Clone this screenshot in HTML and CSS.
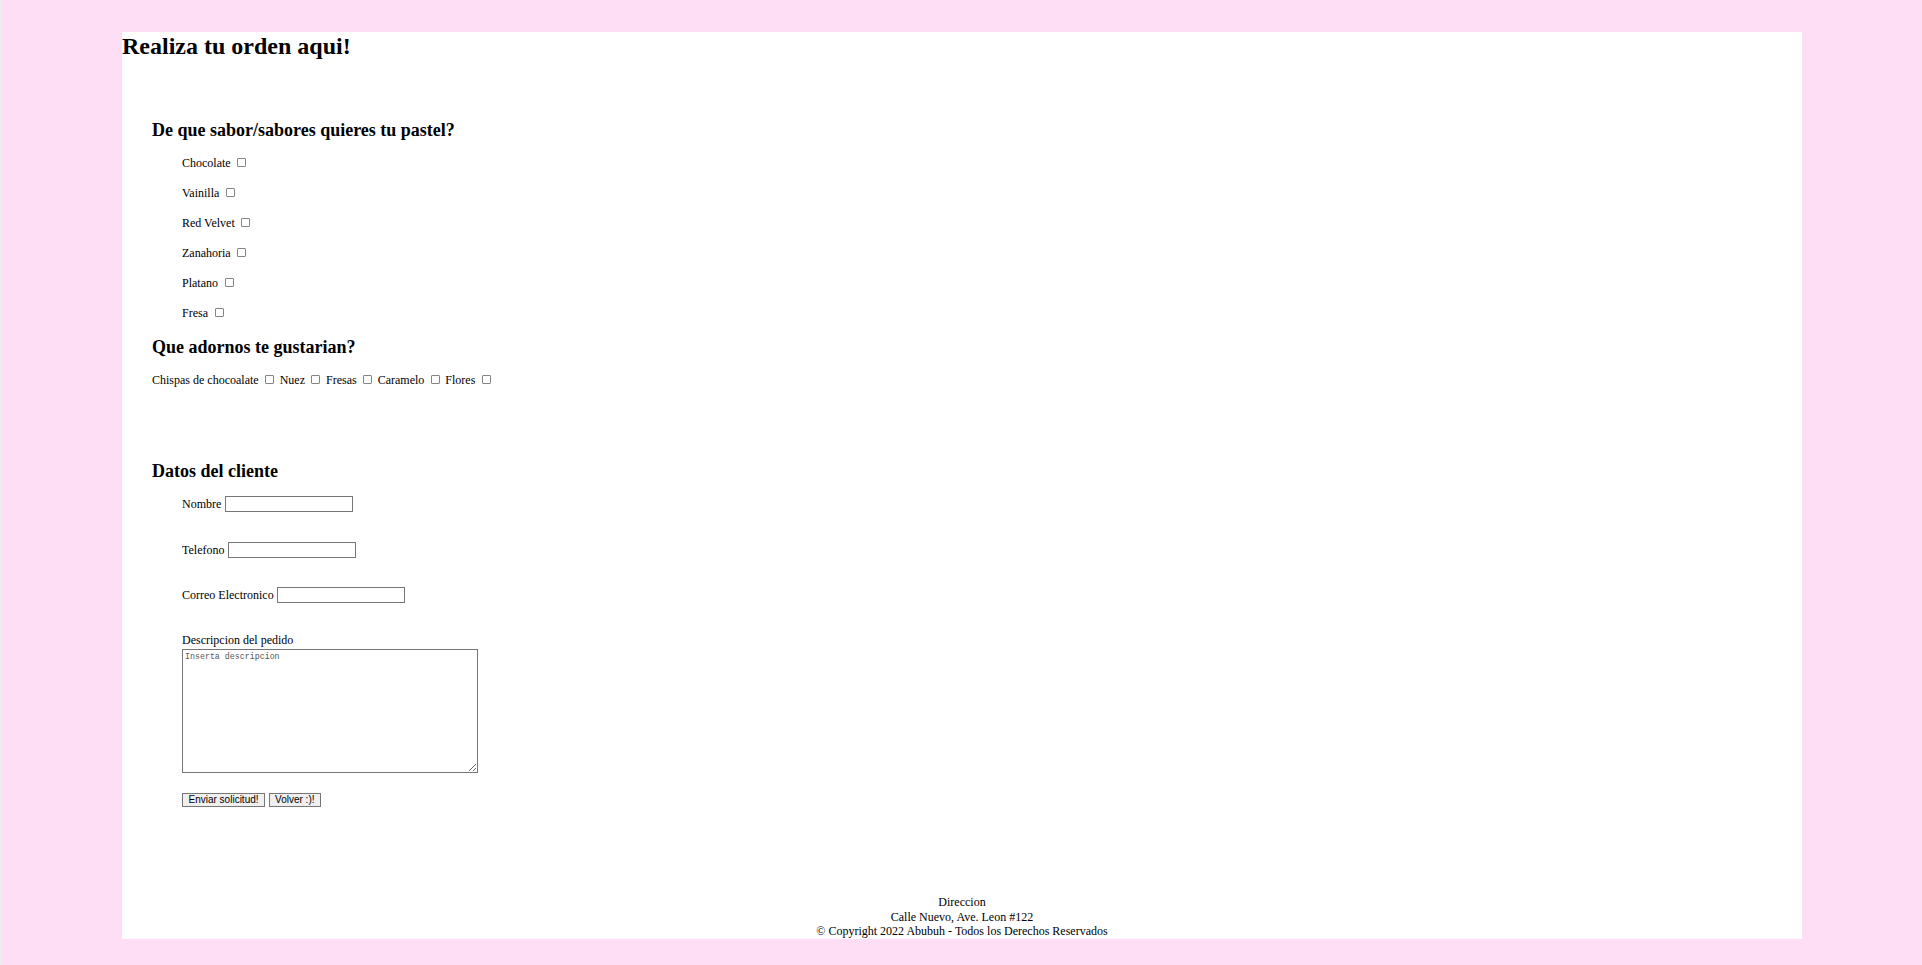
FILE: index.html
```html
<!DOCTYPE html>
<html lang="es">
<head>
<meta charset="utf-8">
<title>Realiza tu orden</title>
<link rel="stylesheet" href="styles.css">
</head>
<body>
<main class="page">
  <h1 class="title">Realiza tu orden aqui!</h1>
  <form class="order">
    <section class="flavors">
      <h3 class="section-title">De que sabor/sabores quieres tu pastel?</h3>
      <div class="flavor-list">
        <label class="check-row">Chocolate <input class="check" type="checkbox"></label>
        <label class="check-row">Vainilla <input class="check" type="checkbox"></label>
        <label class="check-row">Red Velvet <input class="check" type="checkbox"></label>
        <label class="check-row">Zanahoria <input class="check" type="checkbox"></label>
        <label class="check-row">Platano <input class="check" type="checkbox"></label>
        <label class="check-row">Fresa <input class="check" type="checkbox"></label>
      </div>
    </section>
    <section class="toppings">
      <h3 class="section-title">Que adornos te gustarian?</h3>
      <p class="topping-row">Chispas de chocoalate <input class="check" type="checkbox"> Nuez <input class="check" type="checkbox"> Fresas <input class="check" type="checkbox"> Caramelo <input class="check" type="checkbox"> Flores <input class="check" type="checkbox"></p>
    </section>
    <section class="client">
      <h3 class="section-title">Datos del cliente</h3>
      <div class="fields">
        <label class="field">Nombre <input class="text-input" type="text"></label>
        <label class="field">Telefono <input class="text-input" type="text"></label>
        <label class="field">Correo Electronico <input class="text-input" type="text"></label>
        <label class="field-block">Descripcion del pedido<textarea class="textarea" placeholder="Inserta descripcion"></textarea></label>
        <div class="actions"><button class="btn" type="submit">Enviar solicitud!</button><button class="btn" type="button">Volver :)!</button></div>
      </div>
    </section>
  </form>
  <footer class="footer">
    <div class="footer-line">Direccion</div>
    <div class="footer-line">Calle Nuevo, Ave. Leon #122</div>
    <div class="footer-line">© Copyright 2022 Abubuh - Todos los Derechos Reservados</div>
  </footer>
</main>
</body>
</html>
```
FILE: styles.css
```css
* { box-sizing: border-box; }

html, body { height: 100%; }

body {
  margin: 0;
  padding: 32px 0 26px 120px;
  border-left: 2px solid #ececec;
  background: #fddef4;
  font-family: "Liberation Serif", "Times New Roman", serif;
  font-size: 12px;
  color: #000;
}

.page {
  width: 1680px;
  height: 907px;
  background: #ffffff;
  display: flex;
  flex-direction: column;
}

.title {
  margin: 0;
  font-size: 24px;
  line-height: 28px;
  font-weight: bold;
}

.order {
  padding: 60px 0 0 30px;
}

.section-title {
  margin: 0 0 7px;
  font-size: 18px;
  line-height: 21px;
  font-weight: bold;
}

.flavor-list {
  display: flex;
  flex-direction: column;
  padding-left: 30px;
}

.check-row {
  line-height: 30px;
  height: 30px;
}

.check {
  appearance: none;
  -webkit-appearance: none;
  display: inline-block;
  width: 9px;
  height: 9px;
  margin: 0 2.5px 0 3.5px;
  border: 1px solid #858585;
  border-radius: 1px;
  background: #fff;
  vertical-align: baseline;
}

.toppings {
  margin-top: 8.5px;
}

.topping-row {
  margin: 0;
  line-height: 30px;
}

.client {
  margin-top: 66.5px;
}

.fields {
  padding: 7px 0 0 30px;
  display: flex;
  flex-direction: column;
  align-items: flex-start;
}

.field {
  display: flex;
  align-items: center;
  gap: 3.5px;
  height: 16px;
  margin-bottom: 29.5px;
  line-height: 14px;
}

.text-input {
  width: 128px;
  height: 16px;
  border: 1px solid #767676;
  padding: 1px 2px;
  margin: 0;
  font-size: 10px;
}

.field-block {
  display: flex;
  flex-direction: column;
  line-height: 14px;
}

.textarea {
  margin-top: 2px;
  width: 296px;
  height: 124px;
  border: 1px solid #767676;
  padding: 2px;
  font-family: "Liberation Mono", "DejaVu Sans Mono", monospace;
  font-size: 8.3px;
  line-height: 10px;
}

.textarea::placeholder {
  color: #555555;
}

.actions {
  margin-top: 20px;
  display: flex;
  gap: 3.5px;
}

.btn {
  height: 14.5px;
  padding: 0 5.5px;
  margin: 0;
  border: 1px solid #767676;
  border-radius: 0;
  background: #efefef;
  font-family: "Liberation Sans", Arial, sans-serif;
  font-size: 10px;
  line-height: 12px;
  color: #000;
}

.footer {
  margin-top: auto;
  text-align: center;
  line-height: 14.7px;
}
```
